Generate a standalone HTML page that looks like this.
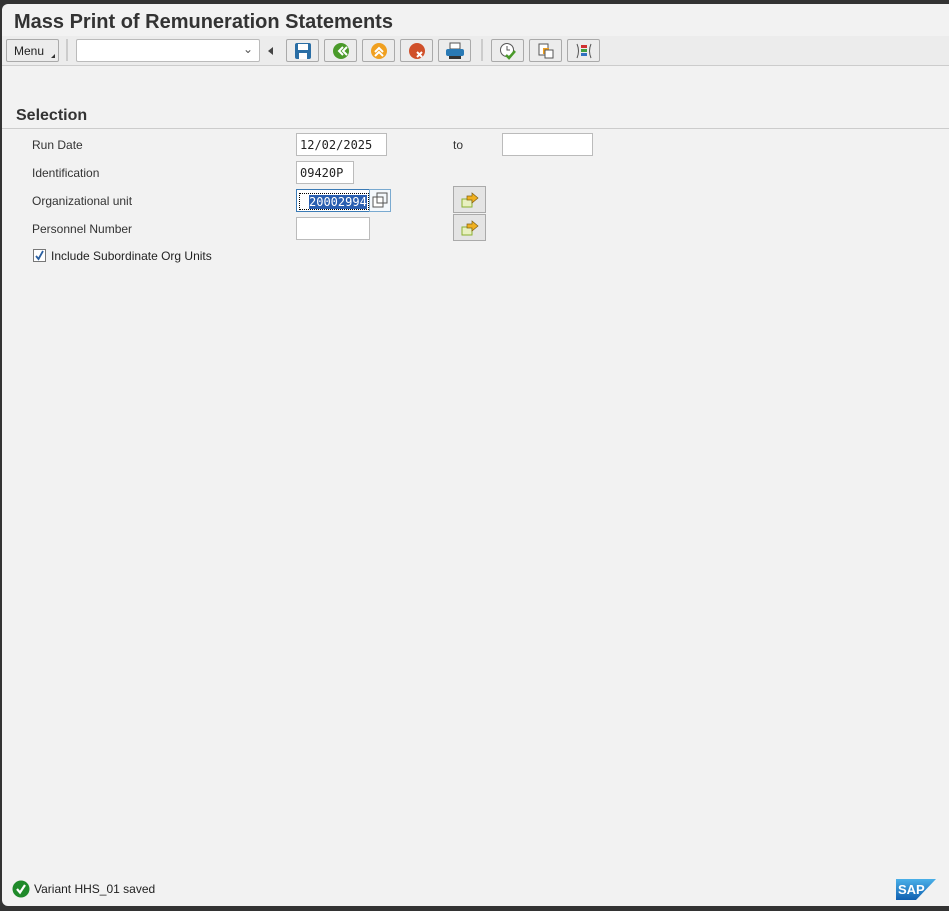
<!DOCTYPE html>
<html><head><style>
*{box-sizing:border-box;margin:0;padding:0}
body{width:949px;height:911px;background:#333;font-family:"Liberation Sans",Arial,sans-serif;overflow:hidden;position:relative}
.win{position:absolute;left:2px;top:4px;width:947px;height:902px;background:#f2f2f2;border-radius:6px 0 0 6px}
.title{position:absolute;left:12px;top:7px;font-size:20px;font-weight:bold;color:#333}
.tb{position:absolute;left:0;top:32px;width:947px;height:30px;border-bottom:1px solid #ccc;background:#ececec}
.btn{position:absolute;top:3px;height:23px;border:1px solid #aaa;background:#ececec;border-radius:2px}
.sep{position:absolute;top:3px;width:2px;height:22px;background:#ccc}
.inp{position:absolute;background:#fff;border:1px solid #bbb;height:23px;font-family:"DejaVu Sans Mono","Liberation Mono",monospace;font-size:12px;padding:4px 3px;color:#222}
.lbl{position:absolute;font-size:12px;color:#333}
.ico{position:absolute;left:50%;top:50%;transform:translate(-50%,-50%)}
</style></head><body>
<div class="win">
<div class="title">Mass Print of Remuneration Statements</div>
<div class="tb">
 <div class="btn" style="left:4px;width:53px;font-size:12px;padding:4px 0 0 7px;color:#222">Menu<span style="position:absolute;right:3px;bottom:3px;width:0;height:0;border-left:4px solid transparent;border-bottom:4px solid #333"></span></div>
 <div class="sep" style="left:64px"></div>
 <div class="btn" style="left:74px;width:184px;background:#fff;border-color:#bbb"><span style="position:absolute;right:6px;top:2px;font-size:12px;color:#555">&#8964;</span></div>
 <div style="position:absolute;left:266px;top:11px;border-right:5px solid #444;border-top:4px solid transparent;border-bottom:4px solid transparent"></div>
 <div class="btn" style="left:284px;width:33px"><svg class="ico" width="18" height="18"><rect x="1" y="1" width="16" height="16" rx="2" fill="#2a6ea5"/><rect x="4" y="2" width="10" height="6" fill="#fff"/><rect x="5" y="11" width="8" height="6" fill="#fff"/></svg></div>
 <div class="btn" style="left:322px;width:33px"><svg class="ico" width="18" height="18"><circle cx="9" cy="9" r="8" fill="#4a9a2a"/><path d="M11 5l-4 4 4 4M15 5l-4 4 4 4" stroke="#fff" stroke-width="2" fill="none"/></svg></div>
 <div class="btn" style="left:360px;width:33px"><svg class="ico" width="18" height="18"><circle cx="9" cy="9" r="8" fill="#f0a020"/><path d="M5 10l4-4 4 4M5 14l4-4 4 4" stroke="#fff" stroke-width="2" fill="none"/></svg></div>
 <div class="btn" style="left:398px;width:33px"><svg class="ico" width="18" height="18"><circle cx="9" cy="9" r="8" fill="#d0502a"/><path d="M9 10l5 5M14 10l-5 5" stroke="#fff" stroke-width="2"/></svg></div>
 <div class="btn" style="left:436px;width:33px"><svg class="ico" width="20" height="18"><rect x="5" y="1" width="10" height="6" fill="#fff" stroke="#555"/><rect x="1" y="7" width="18" height="7" rx="2" fill="#2a7ab5"/><rect x="4" y="14" width="12" height="3" fill="#333"/></svg></div>
 <div class="sep" style="left:479px"></div>
 <div class="btn" style="left:489px;width:33px"><svg class="ico" width="18" height="18"><circle cx="8" cy="8" r="6.5" fill="#fff" stroke="#555"/><path d="M8 4v4h3" stroke="#555" fill="none"/><path d="M7 13l3 3 6-7" stroke="#4a9a2a" stroke-width="2.5" fill="none"/></svg></div>
 <div class="btn" style="left:527px;width:33px"><svg class="ico" width="18" height="18"><rect x="2" y="2" width="9" height="11" fill="#fff" stroke="#555"/><rect x="6" y="6" width="6" height="6" fill="#f0a020"/><rect x="8" y="8" width="8" height="8" fill="#fff" stroke="#555"/></svg></div>
 <div class="btn" style="left:565px;width:33px"><svg class="ico" width="18" height="18"><path d="M2 2q3 7 0 14M16 2q-3 7 0 14" stroke="#555" fill="none"/><rect x="6" y="3" width="6" height="3" fill="#d03030"/><rect x="6" y="7" width="6" height="3" fill="#40a040"/><rect x="6" y="11" width="6" height="3" fill="#3070c0"/></svg></div>
</div>
<div style="position:absolute;left:14px;top:103px;font-size:16px;font-weight:bold;color:#333">Selection</div>
<div style="position:absolute;left:0;top:124px;width:947px;height:1px;background:#ccc"></div>
<div class="lbl" style="left:30px;top:134px">Run Date</div>
<div class="lbl" style="left:30px;top:162px">Identification</div>
<div class="lbl" style="left:30px;top:190px">Organizational unit</div>
<div class="lbl" style="left:30px;top:218px">Personnel Number</div>
<div class="lbl" style="left:451px;top:134px">to</div>
<div class="inp" style="left:294px;top:129px;width:91px">12/02/2025</div>
<div class="inp" style="left:500px;top:129px;width:91px"></div>
<div class="inp" style="left:294px;top:157px;width:58px">09420P</div>
<div class="inp" style="left:294px;top:185px;width:74px;border:1px solid #3a7ab5;padding:3px 2px"><span style="display:inline-block;border:1px dotted #000;padding:1px 1px 0 9px"><span style="background:#2a5fb0;color:#fff">20002994</span></span></div>
<div style="position:absolute;left:367px;top:185px;width:22px;height:23px;border:1px solid #7aaad0;background:#f4f8fc"><svg width="20" height="21"><rect x="3" y="7" width="10" height="10" fill="#fff" stroke="#555"/><rect x="7" y="3" width="10" height="10" fill="none" stroke="#555"/></svg></div>
<div class="inp" style="left:294px;top:213px;width:74px"></div>
<div style="position:absolute;left:451px;top:182px;width:33px;height:27px;border:1px solid #aaa;background:#e4e4e4"><svg class="ico" width="18" height="16"><rect x="1" y="7" width="10" height="8" fill="#e8f0c0" stroke="#8ab030"/><path d="M6 4h5V1l6 5-6 5V8H6z" fill="#f0b020" stroke="#806010" stroke-width=".7"/></svg></div>
<div style="position:absolute;left:451px;top:210px;width:33px;height:27px;border:1px solid #aaa;background:#e4e4e4"><svg class="ico" width="18" height="16"><rect x="1" y="7" width="10" height="8" fill="#e8f0c0" stroke="#8ab030"/><path d="M6 4h5V1l6 5-6 5V8H6z" fill="#f0b020" stroke="#806010" stroke-width=".7"/></svg></div>
<div style="position:absolute;left:31px;top:245px;width:13px;height:13px;border:1px solid #777;background:#fff"><svg width="11" height="11" style="position:absolute;left:0;top:0"><path d="M2 6l2.5 3L9 1" stroke="#2a5fa0" stroke-width="1.8" fill="none"/></svg></div>
<div class="lbl" style="left:49px;top:245px;color:#222">Include Subordinate Org Units</div>
<svg style="position:absolute;left:10px;top:876px" width="18" height="18"><circle cx="9" cy="9" r="8.5" fill="#1f8a2a"/><path d="M5 9l3 3.5L13 5" stroke="#fff" stroke-width="2.2" fill="none"/></svg>
<div class="lbl" style="left:32px;top:878px;color:#222">Variant HHS_01 saved</div>
<svg style="position:absolute;left:894px;top:875px" width="40" height="21"><defs><linearGradient id="g" x1="0" y1="0" x2="0" y2="1"><stop offset="0" stop-color="#4ab0e8"/><stop offset="1" stop-color="#1060b0"/></linearGradient></defs><path d="M0 0h40L20 21H0z" fill="url(#g)"/><text x="2" y="15" font-family="Liberation Sans" font-weight="bold" font-size="13" fill="#fff">SAP</text></svg>
</div>
</body></html>
